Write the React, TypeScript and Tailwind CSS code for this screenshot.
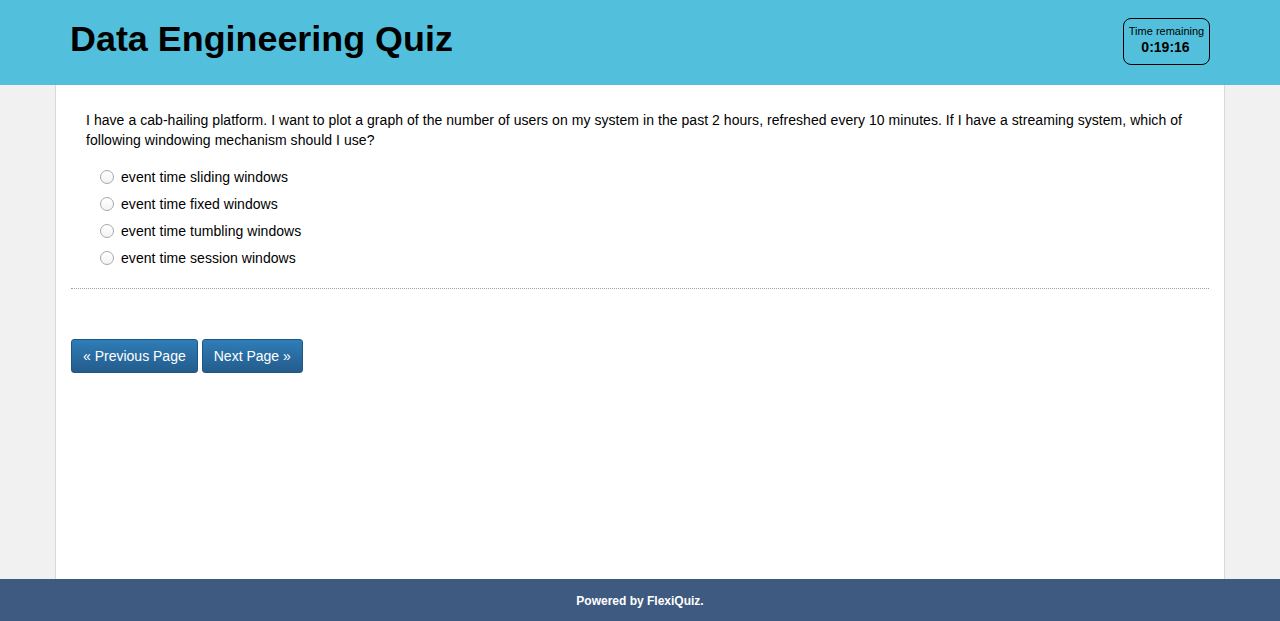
import { useState } from 'react'

const options = [
  'event time sliding windows',
  'event time fixed windows',
  'event time tumbling windows',
  'event time session windows',
]

export default function App() {
  const [answer, setAnswer] = useState<number | null>(null)

  return (
    <div className="flex h-[621px] flex-col bg-[#f1f1f1] font-['Liberation_Sans',Arial,sans-serif] text-black">
      {/* Header */}
      <header className="h-[85px] shrink-0 bg-[#52c0dc]">
        <div className="mx-[70px] flex items-start justify-between">
          <h1 className="mt-[16px] text-[35.9px] font-bold leading-[46px]">Data Engineering Quiz</h1>
          <div className="mt-[18px] flex h-[47px] w-[87px] flex-col items-center rounded-[8px] border border-black pt-[5px]">
            <span className="text-[11px] leading-[14px]">Time remaining</span>
            <span className="pr-[2px] text-[14px] font-bold leading-[18px]">0:19:16</span>
          </div>
        </div>
      </header>

      {/* Main */}
      <main className="mx-[55px] flex-1 border-x border-[#d9d9d9] bg-white">
        <div className="px-[15px] pt-[25px]">
          <p className="px-[15px] text-[14px] leading-[20px] tracking-[0.05px]">
            I have a cab-hailing platform. I want to plot a graph of the number of users on my system in the past 2 hours, refreshed every 10 minutes. If I have a streaming system, which of following windowing mechanism should I use?
          </p>
          <ul className="mt-[17px] flex flex-col gap-[7px] pl-[29px]">
            {options.map((opt, i) => (
              <li key={opt}>
                <label className="flex h-[20px] cursor-pointer items-center gap-[7px] text-[14px] tracking-[0.05px]">
                  <span
                    onClick={() => setAnswer(i)}
                    className="flex h-[14px] w-[14px] items-center justify-center rounded-full border border-[#a8a8a8] bg-gradient-to-b from-white to-[#f3f3f3]"
                  >
                    {answer === i && <span className="h-[6px] w-[6px] rounded-full bg-[#333]" />}
                  </span>
                  {opt}
                </label>
              </li>
            ))}
          </ul>
          <div className="mt-[20px] border-t border-dotted border-[#a0a0a0]" />

          <div className="mt-[50px] flex gap-[4px]">
            <button className="h-[34px] rounded-[3px] border border-[#1f5784] bg-gradient-to-b from-[#2f7db8] to-[#245c8c] px-[11px] text-[14px] text-white">
              « Previous Page
            </button>
            <button className="h-[34px] rounded-[3px] border border-[#1f5784] bg-gradient-to-b from-[#2f7db8] to-[#245c8c] px-[11px] text-[14px] text-white">
              Next Page »
            </button>
          </div>
        </div>
      </main>

      {/* Footer */}
      <footer className="flex h-[42px] shrink-0 items-center justify-center bg-[#3e5a81] pt-[2px] text-[12px] font-bold text-white">
        Powered by FlexiQuiz.
      </footer>
    </div>
  )
}
